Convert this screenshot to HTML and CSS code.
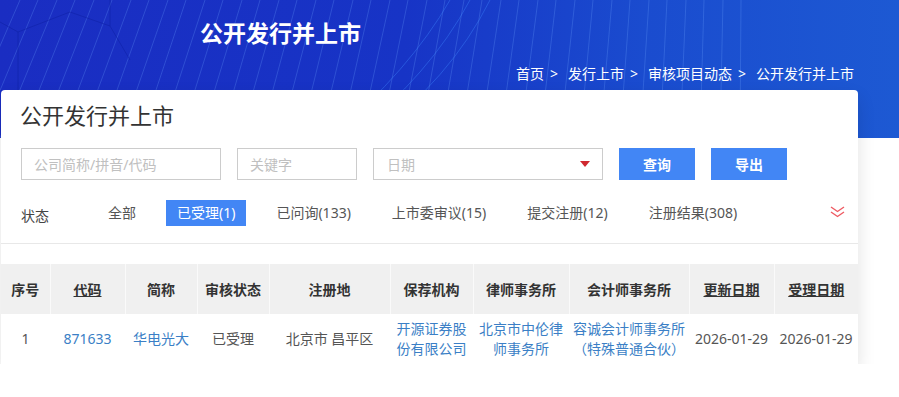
FILE: index.html
```html
<!DOCTYPE html>
<html lang="zh-CN">
<head>
  <meta charset="UTF-8" />
  <meta name="viewport" content="width=device-width, initial-scale=1.0"/>
  <title>公开发行并上市</title>
  <link rel="stylesheet" href="styles.css">
</head>
<body>
  <header class="banner">
    <svg class="banner-lines" width="899" height="138" viewBox="0 0 899 138">
      <g stroke="#6fa6ff" stroke-opacity="0.26" stroke-width="1" fill="none">
        <line x1="-40" y1="138" x2="20" y2="0"/>
        <line x1="-20" y1="138" x2="38" y2="0"/>
        <line x1="0" y1="138" x2="57" y2="0"/>
        <line x1="20" y1="138" x2="75" y2="0"/>
        <line x1="40" y1="138" x2="94" y2="0"/>
        <line x1="60" y1="138" x2="112" y2="0"/>
        <line x1="80" y1="138" x2="131" y2="0"/>
        <line x1="100" y1="138" x2="149" y2="0"/>
        <line x1="120" y1="138" x2="168" y2="0"/>
        <line x1="140" y1="138" x2="186" y2="0"/>
        <line x1="160" y1="138" x2="205" y2="0"/>
        <line x1="180" y1="138" x2="223" y2="0"/>
        <line x1="200" y1="138" x2="242" y2="0"/>
        <line x1="220" y1="138" x2="260" y2="0"/>
        <line x1="240" y1="138" x2="279" y2="0"/>
        <line x1="260" y1="138" x2="297" y2="0"/>
        <line x1="280" y1="138" x2="316" y2="0"/>
        <line x1="300" y1="138" x2="334" y2="0"/>
        <line x1="320" y1="138" x2="353" y2="0"/>
        <line x1="340" y1="138" x2="371" y2="0"/>
        <line x1="360" y1="138" x2="390" y2="0"/>
        <line x1="380" y1="138" x2="408" y2="0"/>
        <line x1="400" y1="138" x2="427" y2="0"/>
        <line x1="420" y1="138" x2="445" y2="0"/>
        <line x1="440" y1="138" x2="464" y2="0"/>
        <line x1="460" y1="138" x2="482" y2="0"/>
        <line x1="480" y1="138" x2="501" y2="0"/>
        <line x1="500" y1="138" x2="519" y2="0"/>
        <line x1="520" y1="138" x2="538" y2="0"/>
        <line x1="540" y1="138" x2="556" y2="0"/>
        <line x1="560" y1="138" x2="575" y2="0"/>
        <line x1="580" y1="138" x2="593" y2="0"/>
        <line x1="600" y1="138" x2="612" y2="0"/>
        <line x1="620" y1="138" x2="630" y2="0"/>
        <line x1="640" y1="138" x2="649" y2="0"/>
        <line x1="660" y1="138" x2="667" y2="0"/>
        <line x1="680" y1="138" x2="686" y2="0"/>
        <line x1="700" y1="138" x2="704" y2="0"/>
        <line x1="720" y1="138" x2="723" y2="0"/>
        <line x1="740" y1="138" x2="741" y2="0"/>
      </g>
      <g stroke="#3f86ff" stroke-opacity="0.4" fill="none">
        <path d="M330 138 Q410 70 450 0"/>
        <path d="M350 138 Q430 75 470 0"/>
        <path d="M370 138 Q450 80 490 0"/>
      </g>
      <g stroke="#0f22a8" stroke-opacity="0.6" fill="none">
        <polyline points="0,22 18,32 18,100"/>
        <polyline points="18,32 70,12 110,26 110,0"/>
        <polyline points="110,26 130,60"/>
      </g>
    </svg>
    <h1 class="banner-title">公开发行并上市</h1>
    <nav class="crumbs">
      <span>首页</span><span class="sep">&gt;</span><span>发行上市</span><span class="sep">&gt;</span><span>审核项目动态</span><span class="sep">&gt;</span><span>公开发行并上市</span>
    </nav>
  </header>

  <main class="card">
    <h2 class="card-title">公开发行并上市</h2>

    <div class="filters">
      <div class="search-row">
        <input class="field field-company" type="text" placeholder="公司简称/拼音/代码">
        <input class="field field-keyword" type="text" placeholder="关键字">
        <div class="field field-date">
          <span class="date-text">日期</span>
          <span class="caret"></span>
        </div>
        <button class="btn" type="button">查询</button>
        <button class="btn" type="button">导出</button>
      </div>

      <div class="status-row">
        <span class="status-label">状态</span>
        <a href="#" class="tab">全部</a>
        <a href="#" class="tab tab-active">已受理(1)</a>
        <a href="#" class="tab">已问询(133)</a>
        <a href="#" class="tab">上市委审议(15)</a>
        <a href="#" class="tab">提交注册(12)</a>
        <a href="#" class="tab">注册结果(308)</a>
        <svg class="more" width="15" height="12" viewBox="0 0 15 12">
          <path d="M1 1 L7.5 5.5 L14 1 M1 6 L7.5 10.5 L14 6" stroke="#ee5a62" stroke-width="1.4" fill="none"/>
        </svg>
      </div>
    </div>

    <table class="list">
      <colgroup>
        <col style="width:49px"><col style="width:75px"><col style="width:72px"><col style="width:72px"><col style="width:121px">
        <col style="width:83px"><col style="width:96px"><col style="width:120px"><col style="width:85px"><col style="width:84px">
      </colgroup>
      <thead>
        <tr>
          <th>序号</th>
          <th><span class="sortable">代码</span></th>
          <th>简称</th>
          <th>审核状态</th>
          <th>注册地</th>
          <th>保荐机构</th>
          <th>律师事务所</th>
          <th>会计师事务所</th>
          <th><span class="sortable">更新日期</span></th>
          <th><span class="sortable">受理日期</span></th>
        </tr>
      </thead>
      <tbody>
        <tr>
          <td>1</td>
          <td><a href="#" class="link">871633</a></td>
          <td><a href="#" class="link">华电光大</a></td>
          <td>已受理</td>
          <td>北京市 昌平区</td>
          <td><a href="#" class="link">开源证券股份有限公司</a></td>
          <td><a href="#" class="link">北京市中伦律师事务所</a></td>
          <td><a href="#" class="link">容诚会计师事务所（特殊普通合伙）</a></td>
          <td class="date">2026-01-29</td>
          <td class="date">2026-01-29</td>
        </tr>
      </tbody>
    </table>
  </main>
</body>
</html>
```

FILE: styles.css
```css
body {
  margin: 0;
  font-family: "Noto Sans", "Noto Sans CJK SC", sans-serif;
  background: #ffffff;
  color: #555;
}
.banner {
  position: relative;
  height: 138px;
  overflow: hidden;
  color: #fff;
  background: linear-gradient(90deg, #1a2dc2 0%, #1734c6 45%, #1a4ccf 72%, #1d59d3 100%);
}
.banner-lines {
  position: absolute;
  left: 0;
  top: 0;
}
.banner-title {
  position: relative;
  margin: 0;
  padding: 18px 0 0 200px;
  font-size: 23px;
  font-weight: 700;
  line-height: 30px;
}
.crumbs {
  position: relative;
  margin-top: 16px;
  padding-right: 45px;
  text-align: right;
  font-size: 14px;
  line-height: 20px;
}
.crumbs .sep {
  margin: 0 10px 0 6px;
}
.card {
  position: relative;
  width: 857px;
  margin: -48px 0 0 1px;
  background: #fff;
  border-radius: 4px 4px 0 0;
  box-shadow: 0 8px 18px rgba(0, 0, 0, 0.12);
}
.card-title {
  margin: 0;
  padding: 10px 19px 0;
  font-size: 22px;
  font-weight: 400;
  line-height: 30px;
  color: #333;
}
.filters {
  padding: 18px 13px 17px 20px;
  border-bottom: 1px solid #e8e8e8;
}
.search-row {
  display: flex;
  gap: 16px;
}
.field {
  box-sizing: border-box;
  height: 32px;
  border: 1px solid #cccccc;
  padding: 0 12px;
  font-family: inherit;
  font-size: 14px;
  color: #333;
  outline: none;
}
.field::placeholder {
  color: #c0c0c0;
}
.field-company {
  width: 200px;
}
.field-keyword {
  width: 120px;
}
.field-date {
  width: 230px;
  display: flex;
  align-items: center;
  justify-content: space-between;
  padding: 0 12px 0 13px;
}
.date-text {
  color: #c0c0c0;
}
.caret {
  width: 0;
  height: 0;
  border-left: 5.5px solid transparent;
  border-right: 5.5px solid transparent;
  border-top: 6px solid #d0282f;
}
.btn {
  width: 76px;
  height: 32px;
  border: none;
  background: #4286f5;
  color: #fff;
  font-family: inherit;
  font-size: 14px;
  font-weight: 700;
  cursor: pointer;
}
.status-row {
  display: flex;
  align-items: center;
  margin-top: 20px;
  height: 26px;
}
.status-label {
  width: 76px;
  padding-top: 4px;
  font-size: 14px;
  color: #444;
}
.tab {
  margin-right: 19px;
  padding: 0 11px;
  font-size: 14px;
  line-height: 26px;
  color: #555;
  text-decoration: none;
}
.tab-active {
  background: #4286f5;
  color: #fff;
}
.more {
  margin-left: auto;
  margin-top: -3px;
}
.list {
  width: 857px;
  margin-top: 20px;
  border-collapse: collapse;
  table-layout: fixed;
  font-size: 14px;
}
.list th {
  height: 50px;
  padding: 0 2px;
  background: #f0f0f0;
  border-left: 1px solid #fafafa;
  color: #333;
  font-weight: 700;
  text-align: center;
}
.list th:first-child {
  border-left: none;
}
.sortable {
  text-decoration: underline;
}
.list td {
  height: 50px;
  padding: 0 3px;
  text-align: center;
  line-height: 20px;
  color: #555;
}
.list td.date {
  padding: 0 1px;
  white-space: nowrap;
}
.link {
  color: #3b7fc6;
  text-decoration: none;
}
```
